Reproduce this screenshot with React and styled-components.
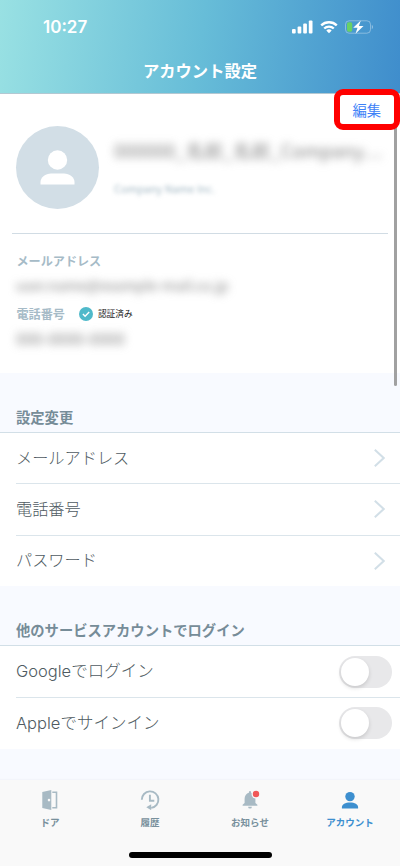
import { useState } from "react";
import styled, { createGlobalStyle } from "styled-components";

const GlobalStyle = createGlobalStyle`
  * {
    box-sizing: border-box;
  }

  body {
    margin: 0;
    background: #f8faff;
    font-family: "Noto Sans CJK JP", sans-serif;
  }

  button {
    padding: 0;
    border: none;
    background: none;
    font-family: inherit;
    cursor: pointer;
  }

  svg {
    display: block;
  }
`;

const Screen = styled.div`
  position: relative;
  display: flex;
  flex-direction: column;
  width: 400px;
  height: 866px;
  overflow: hidden;
  background: #f8faff;
`;

const Header = styled.header`
  flex: none;
  display: flex;
  flex-direction: column;
  height: 94px;
  border-bottom: 1px solid #b3c8d2;
  color: #fff;
  background: linear-gradient(97deg, #99e1e3 0%, #67bdd8 50%, #3f8dcc 100%);
`;

const StatusBar = styled.div`
  display: flex;
  align-items: center;
  justify-content: space-between;
  height: 54px;
  padding: 0 27px 0 43px;
`;

const Clock = styled.span`
  font-family: Inter, sans-serif;
  font-size: 17px;
  font-weight: 600;
  line-height: 20px;
`;

const StatusIcons = styled.div`
  display: flex;
  align-items: center;
  gap: 7px;
`;

const Title = styled.h1`
  margin: 4px 0 0;
  font-size: 16.3px;
  font-weight: 700;
  line-height: 24px;
  text-align: center;
`;

const Profile = styled.section`
  flex: none;
  height: 279px;
  background: #fff;
`;

const EditRow = styled.div`
  display: flex;
  justify-content: flex-end;
  height: 32px;
  padding-right: 19px;
`;

const EditButton = styled.button`
  color: #3e82f7;
  font-size: 14.3px;
  font-weight: 400;
  line-height: 31px;
  height: 31px;
`;

const Person = styled.div`
  display: flex;
  gap: 15px;
  height: 108px;
  margin: 0 12px;
  padding-left: 4px;
  border-bottom: 1px solid #d1dce4;
`;

const Avatar = styled.div`
  flex: none;
  display: flex;
  align-items: center;
  justify-content: center;
  width: 83px;
  height: 83px;
  border-radius: 50%;
  background: #d2dee6;
`;

const Names = styled.div`
  padding-top: 12px;
  white-space: nowrap;
`;

const Masked = styled.div`
  color: ${({ $color }) => $color || "#808080"};
  font-size: ${({ $size }) => $size || 14}px;
  line-height: ${({ $line }) => $line || 24}px;
  filter: blur(${({ $blur }) => $blur || 4}px);
  white-space: nowrap;
`;

const AltName = styled.div`
  margin-top: 14px;
`;

const Contact = styled.div`
  padding: 18px 16px 0;
`;

const Label = styled.div`
  display: flex;
  align-items: center;
  height: 18px;
  padding-left: 0.5px;
  color: #a6bbc7;
  font-size: 12.1px;
  font-weight: 700;
  line-height: 18px;
`;

const Verified = styled.span`
  display: flex;
  align-items: center;
  gap: 5px;
  margin-left: 14px;
  color: #222;
  font-size: 8.7px;
  font-weight: 400;
`;

const Value = styled.div`
  height: 35px;
  padding-top: 3px;
`;

const SectionTitle = styled.h2`
  flex: none;
  height: 60px;
  margin: 0;
  padding: 33px 16px 0;
  border-bottom: 1px solid #d2dfe7;
  color: #768c98;
  font-size: 14.3px;
  font-weight: 700;
  line-height: 22px;
`;

const List = styled.div`
  flex: none;
  background: #fff;
`;

const Row = styled.div`
  display: flex;
  align-items: center;
  justify-content: space-between;
  height: ${({ $first }) => $first || 50}px;
  margin-left: 16px;
  padding-right: ${({ $right }) => $right}px;
  color: #4f5b62;
  font-family: Inter, "Noto Sans CJK JP", sans-serif;
  font-size: ${({ $size }) => $size || 16.2}px;
  font-weight: 300;
  line-height: 24px;

  & + & {
    height: 51.5px;
    border-top: 1px solid #dbe5eb;
  }
`;

const RowName = styled.span`
  padding-bottom: 1px;
`;

const Toggle = styled.button`
  width: 53px;
  height: 32px;
  padding: 2px;
  border-radius: 16px;
  background: ${({ $on }) => ($on ? "#55bccb" : "#e8e8ea")};
`;

const Knob = styled.span`
  display: block;
  width: 28px;
  height: 28px;
  margin-left: ${({ $on }) => ($on ? 21 : 0)}px;
  border-radius: 50%;
  background: #fff;
  box-shadow: 0 2px 4px rgba(0, 0, 0, 0.14);
`;

const TabBar = styled.nav`
  flex: none;
  display: grid;
  grid-template-columns: repeat(4, 1fr);
  height: 72px;
  margin-top: auto;
  padding-top: 10px;
  background: #f9f9f9;
  box-shadow: 0 -1px 1px rgba(90, 100, 120, 0.03);
`;

const Tab = styled.button`
  display: flex;
  flex-direction: column;
  align-items: center;
  gap: 4px;
  color: ${({ $active }) => ($active ? "#3d8fcf" : "#78909c")};
  font-size: 9.5px;
  font-weight: 700;
  line-height: 17px;
`;

const HomeArea = styled.div`
  flex: none;
  display: flex;
  justify-content: center;
  height: 14px;
  background: #f9f9f9;
`;

const HomeIndicator = styled.div`
  width: 143px;
  height: 5.5px;
  border-radius: 3px;
  background: #000;
`;

/* Scroll thumb floats above the page */
const ScrollThumb = styled.div`
  position: absolute;
  top: 95px;
  right: 3px;
  width: 3px;
  height: 291px;
  border-radius: 2px;
  background: #a1a1a1;
`;

/* Red marker around the edit button */
const Highlight = styled.div`
  position: absolute;
  top: 89px;
  right: 0;
  width: 66px;
  height: 41px;
  border: 6px solid #ff0000;
  border-radius: 9px;
  pointer-events: none;
`;

const SignalIcon = () => (
  <svg width="21" height="14" viewBox="0 0 21 14" fill="#fff">
    <rect x="0" y="9" width="3.7" height="4.5" rx="1" />
    <rect x="5.6" y="6.5" width="3.7" height="7" rx="1" />
    <rect x="11.2" y="3.5" width="3.7" height="10" rx="1" />
    <rect x="16.8" y="0.5" width="3.7" height="13" rx="1" />
  </svg>
);

const WifiIcon = () => (
  <svg width="18" height="14" viewBox="0 0 18 14">
    <g fill="none" stroke="#fff" strokeWidth="2.3">
      <path d="M1.2 5.4a11.2 11.2 0 0 1 15.6 0" />
      <path d="M4.2 8.5a7 7 0 0 1 9.6 0" />
    </g>
    <path d="M9 13.2 6.3 10.6a3.9 3.9 0 0 1 5.4 0Z" fill="#fff" />
  </svg>
);

const BatteryIcon = () => (
  <svg width="28" height="14" viewBox="0 0 28 14">
    <rect x="0.5" y="0.8" width="25" height="12.4" rx="3.6" fill="none" stroke="#fff" strokeOpacity="0.35" />
    <path d="M26.8 5v4c.7-.3 1.1-1.1 1.1-2s-.4-1.7-1.1-2Z" fill="#fff" fillOpacity="0.45" />
    <rect x="2" y="2.3" width="5.2" height="9.4" rx="1.6" fill="#69d165" />
    <path d="M15.8.5 8.2 7.7h4.3l-2 6 8-7.700h-4.600Z" fill="#fff" />
  </svg>
);

const AvatarIcon = () => (
  <svg width="35" height="35" viewBox="0 0 35 35" fill="#fff">
    <circle cx="17.5" cy="10" r="9.7" />
    <path d="M.5 34.4v-2.3c0-5.2 5-8.7 10.5-8.7h13c5.5 0 10.5 3.5 10.5 8.7v2.3Z" />
  </svg>
);

const CheckIcon = () => (
  <svg width="14" height="14" viewBox="0 0 14 14">
    <circle cx="7" cy="7" r="7" fill="#4fb9ca" />
    <path d="m3.9 7 2.2 2.2 4.1-4.2" fill="none" stroke="#fff" strokeWidth="1.4" />
  </svg>
);

const ChevronIcon = () => (
  <svg width="11" height="18" viewBox="0 0 11 18">
    <path d="M.8.8 9.7 9 .8 17.2" fill="none" stroke="#d2dfe7" strokeWidth="2" />
  </svg>
);

const DoorIcon = () => (
  <svg width="20" height="20" viewBox="0 0 20 20">
    <path
      fill="#a8bac4"
      fillRule="evenodd"
      d="M2.3 2.1 11.3 0v20l-9-2.1ZM9 8.800a1.300 1.300 0 1 0 0 2.600 1.300 1.300 0 0 0 0-2.600Z"
    />
    <path d="M12.3 2.3h4.200v15.400h-4.200" fill="none" stroke="#a8bac4" strokeWidth="1.6" />
  </svg>
);

const HistoryIcon = () => (
  <svg width="20" height="20" viewBox="0 0 20 20">
    <g fill="none" stroke="#a8bac4" strokeWidth="1.9">
      <path d="M1.8 9.8a8.3 8.3 0 1 1 9.4 8.1" />
      <path d="M9.9 4.7v6h4.400" />
    </g>
    <path d="m6.3 17.2 4.900-3v6Z" fill="#a8bac4" />
  </svg>
);

const BellIcon = () => (
  <svg width="20" height="20" viewBox="0 0 20 20">
    <path
      fill="#a8bac4"
      d="M8.9 2.3c0-.8.5-1.4 1.1-1.4s1.1.6 1.1 1.4v.4c2.7.7 4.3 3 4.3 6v4.2l2 1.9v.9H2.6v-.9l2-1.9V8.7c0-3 1.6-5.3 4.3-6ZM8.1 16.7h3.8a1.9 1.9 0 0 1-3.8 0Z"
    />
    <circle cx="16" cy="4" r="4.5" fill="#f9f9f9" />
    <circle cx="16" cy="4" r="3.2" fill="#f05858" />
  </svg>
);

const AccountIcon = () => (
  <svg width="20" height="20" viewBox="0 0 20 20" fill="#3d8fcf">
    <circle cx="10" cy="6.6" r="4.7" />
    <path d="M1.900 18.500v-1.400c0-2.700 3.400-4.600 8.100-4.600s8.100 1.900 8.100 4.600v1.400Z" />
  </svg>
);

const settings = ["メールアドレス", "電話番号", "パスワード"];

const services = [
  { id: "google", name: "Googleでログイン" },
  { id: "apple", name: "Appleでサインイン" },
];

const tabs = [
  { name: "ドア", Icon: DoorIcon },
  { name: "履歴", Icon: HistoryIcon },
  { name: "お知らせ", Icon: BellIcon },
  { name: "アカウント", Icon: AccountIcon },
];

const App = () => {
  const [linked, setLinked] = useState({ google: false, apple: false });
  const [tab, setTab] = useState("アカウント");

  const toggleService = (id) => {
    setLinked({ ...linked, [id]: !linked[id] });
  };

  return (
    <>
      <GlobalStyle />
      <Screen>
        <Header>
          <StatusBar>
            <Clock>10:27</Clock>
            <StatusIcons>
              <SignalIcon />
              <WifiIcon />
              <BatteryIcon />
            </StatusIcons>
          </StatusBar>
          <Title>アカウント設定</Title>
        </Header>

        <Profile>
          <EditRow>
            <EditButton>編集</EditButton>
          </EditRow>
          <Person>
            <Avatar>
              <AvatarIcon />
            </Avatar>
            <Names>
              <Masked $size={18.5}>000000_名前_名前_Company…</Masked>
              <AltName>
                <Masked $size={10.8} $blur={2} $color="#a3b8c4">Company Name Inc.</Masked>
              </AltName>
            </Names>
          </Person>
          <Contact>
            <Label>メールアドレス</Label>
            <Value>
              <Masked $size={14.4}>user.name@example-mail.co.jp</Masked>
            </Value>
            <Label>
              電話番号
              <Verified>
                <CheckIcon />
                認証済み
              </Verified>
            </Label>
            <Value>
              <Masked $size={16}>000-0000-0000</Masked>
            </Value>
          </Contact>
        </Profile>

        <SectionTitle>設定変更</SectionTitle>
        <List>
          {settings.map((name) => (
            <Row key={name} $right={15}>
              <RowName>{name}</RowName>
              <ChevronIcon />
            </Row>
          ))}
        </List>

        <SectionTitle>他のサービスアカウントでログイン</SectionTitle>
        <List>
          {services.map(({ id, name }) => (
            <Row key={id} $right={8} $first={51} $size={16.5}>
              <RowName>{name}</RowName>
              <Toggle $on={linked[id]} onClick={() => toggleService(id)}>
                <Knob $on={linked[id]} />
              </Toggle>
            </Row>
          ))}
        </List>

        <TabBar>
          {tabs.map(({ name, Icon }) => (
            <Tab key={name} $active={tab === name} onClick={() => setTab(name)}>
              <Icon />
              {name}
            </Tab>
          ))}
        </TabBar>
        <HomeArea>
          <HomeIndicator />
        </HomeArea>

        <ScrollThumb />
        <Highlight />
      </Screen>
    </>
  );
};

export default App;
